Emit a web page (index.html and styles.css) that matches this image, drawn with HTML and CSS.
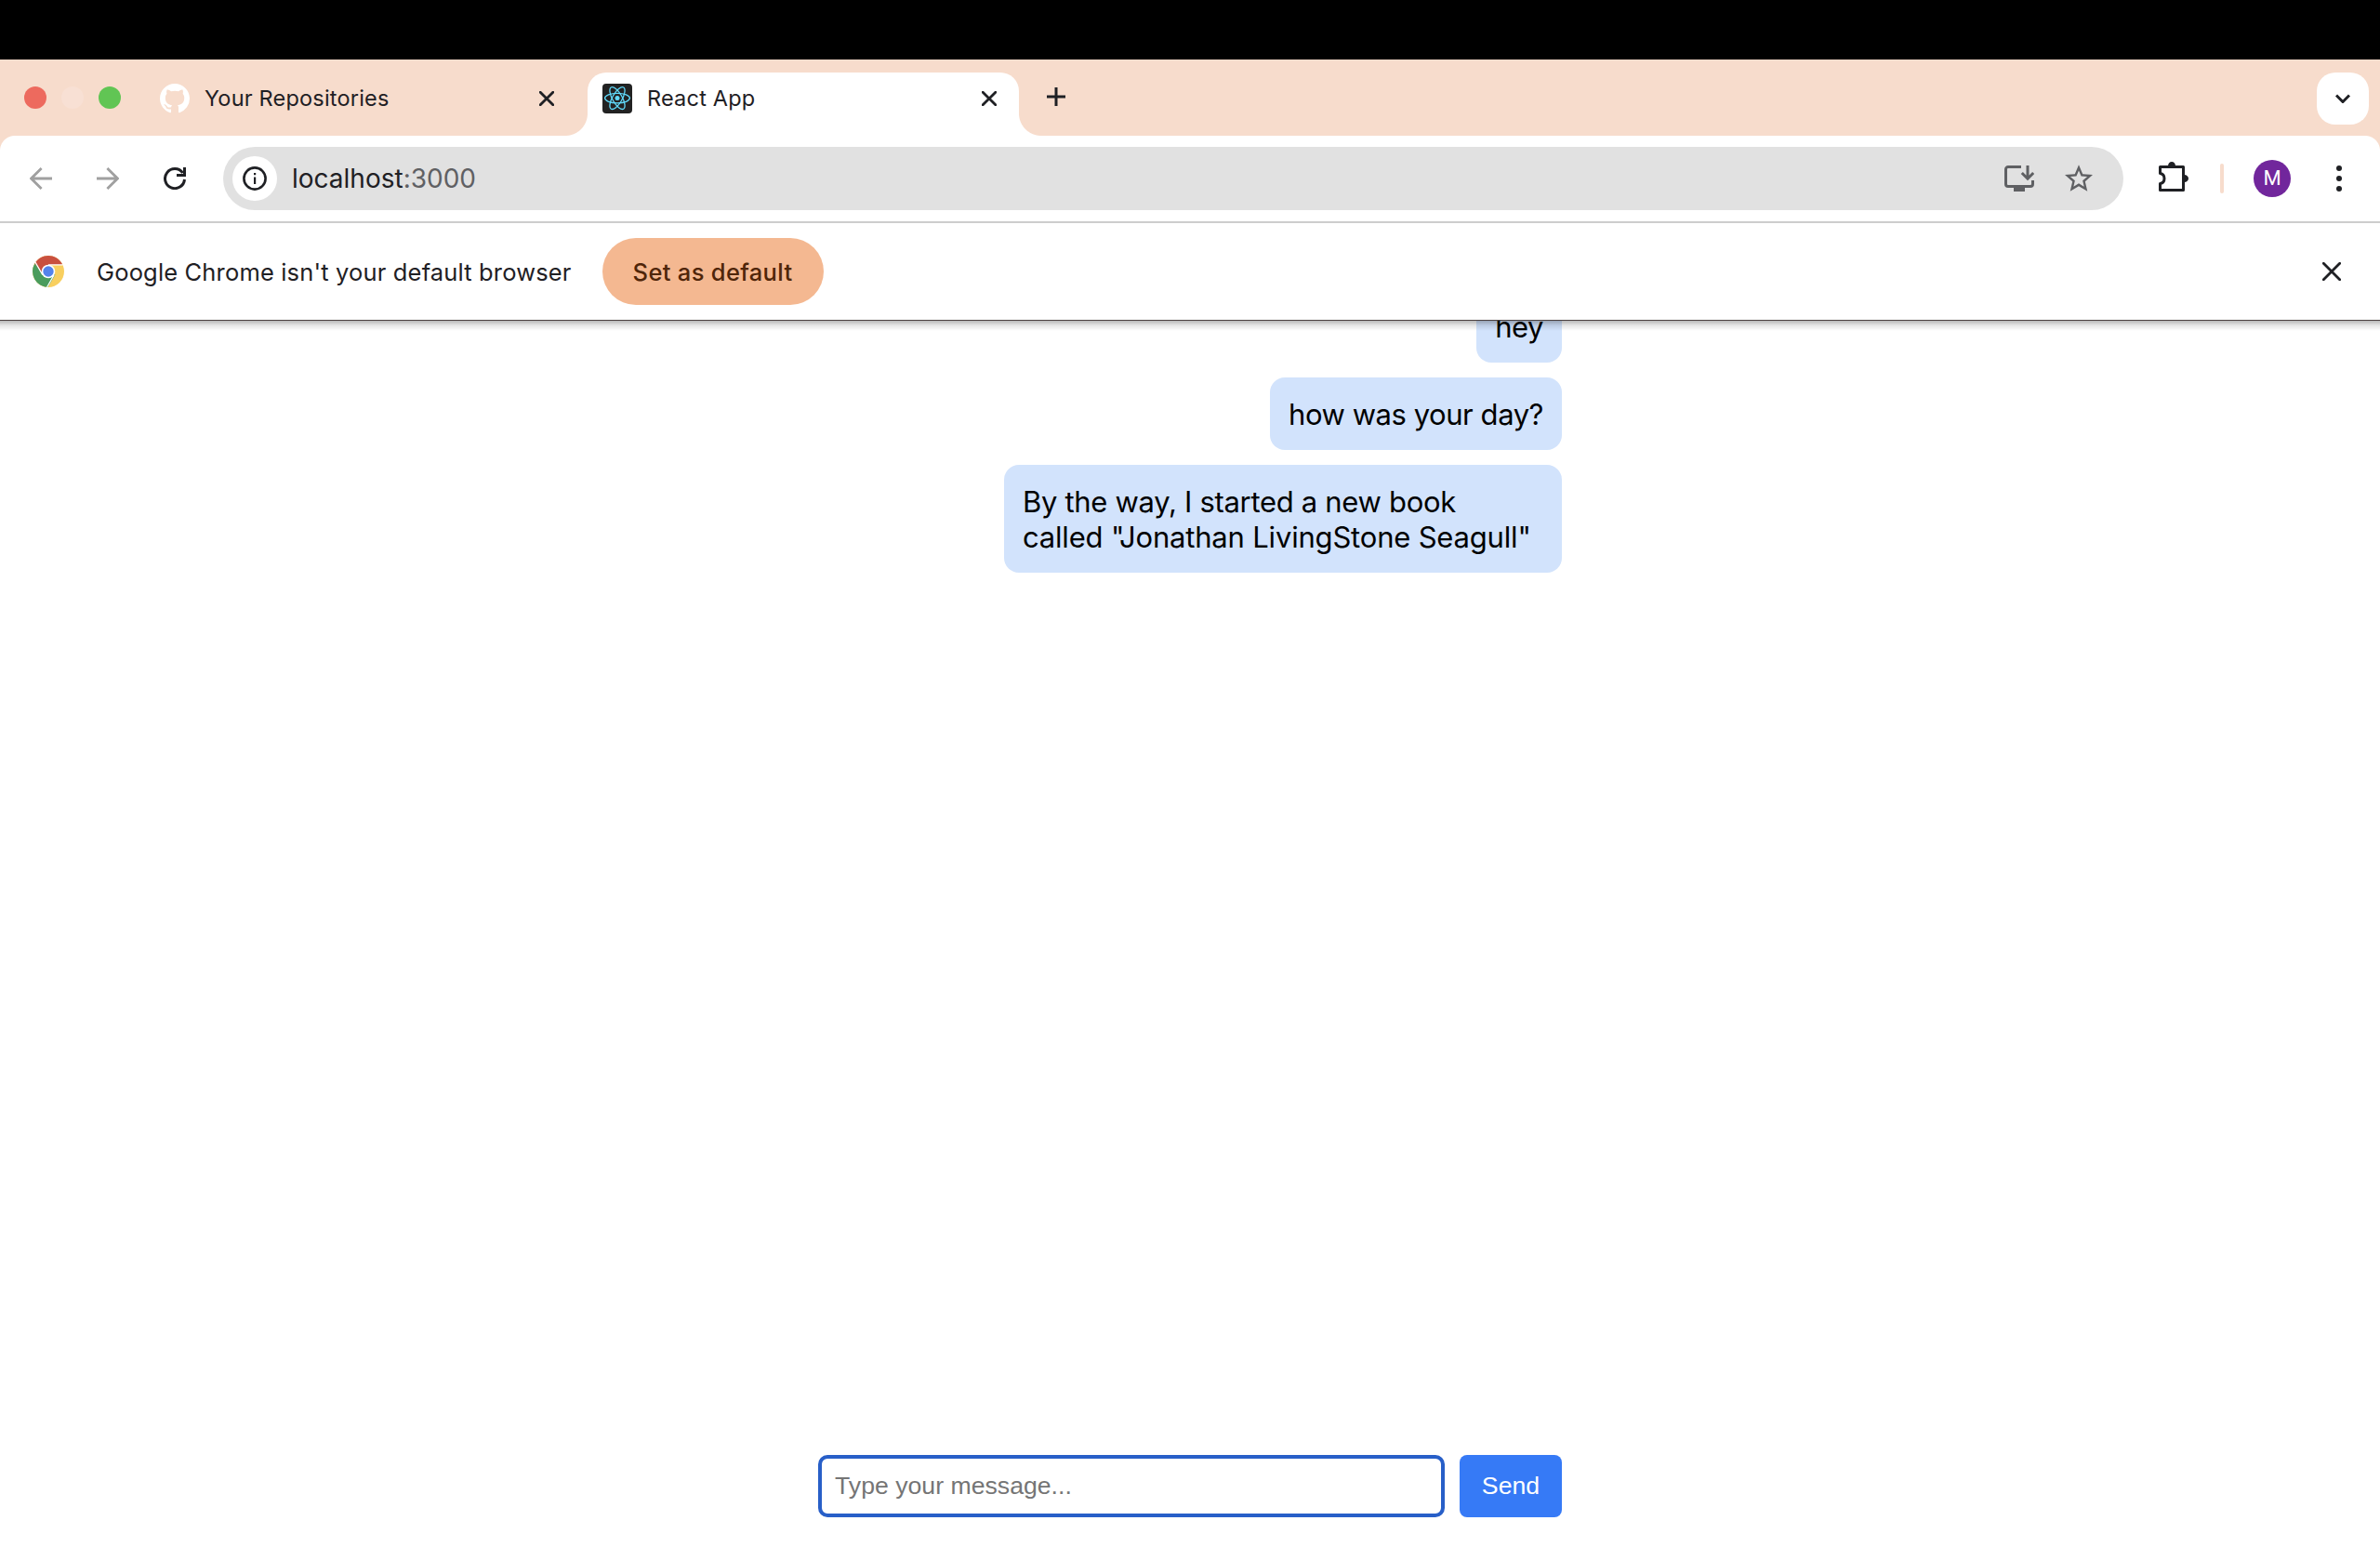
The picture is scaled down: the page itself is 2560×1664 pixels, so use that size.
FILE: index.html
```html
<!DOCTYPE html>
<html lang="en">
<head>
<meta charset="utf-8">
<title>React App</title>
<link rel="stylesheet" href="styles.css">
</head>
<body>
<div class="menubar"></div>
<header class="tabstrip">
  <div class="lights"><span class="light red"></span><span class="light idle"></span><span class="light green"></span></div>
  <div class="tab">
    <svg class="favicon" viewBox="0 0 16 16" fill="#fff"><path d="M8 0C3.58 0 0 3.58 0 8c0 3.54 2.29 6.53 5.47 7.59.4.07.55-.17.55-.38 0-.19-.01-.82-.01-1.49-2.01.37-2.53-.49-2.69-.94-.09-.23-.48-.94-.82-1.13-.28-.15-.68-.52-.01-.53.63-.01 1.08.58 1.23.82.72 1.21 1.87.87 2.33.66.07-.52.28-.87.51-1.07-1.78-.2-3.64-.89-3.64-3.95 0-.87.31-1.59.82-2.15-.08-.2-.36-1.02.08-2.12 0 0 .67-.21 2.2.82.64-.18 1.32-.27 2-.27s1.36.09 2 .27c1.53-1.04 2.2-.82 2.2-.82.44 1.1.16 1.92.08 2.12.51.56.82 1.27.82 2.15 0 3.07-1.87 3.75-3.65 3.95.29.25.54.73.54 1.48 0 1.07-.01 1.93-.01 2.2 0 .21.15.46.55.38A8.01 8.01 0 0 0 16 8c0-4.42-3.58-8-8-8z"/></svg>
    <span class="tab-title">Your Repositories</span>
    <svg class="tab-close" viewBox="0 0 16 16"><path d="M1.2 1.2l13.6 13.6M14.8 1.2L1.2 14.8"/></svg>
  </div>
  <div class="tab active">
    <svg class="favicon" viewBox="0 0 32 32"><rect width="32" height="32" rx="4" fill="#222"/><g fill="none" stroke="#61dafb" stroke-width="1.3"><ellipse cx="16" cy="15.6" rx="13.4" ry="5.2"/><ellipse cx="16" cy="15.6" rx="13.4" ry="5.2" transform="rotate(60 16 15.6)"/><ellipse cx="16" cy="15.6" rx="13.4" ry="5.2" transform="rotate(120 16 15.6)"/></g><circle cx="16" cy="15.6" r="2.5" fill="#61dafb"/></svg>
    <span class="tab-title">React App</span>
    <svg class="tab-close" viewBox="0 0 16 16"><path d="M1.2 1.2l13.6 13.6M14.8 1.2L1.2 14.8"/></svg>
  </div>
  <svg class="new-tab" viewBox="0 0 20 20"><path d="M10 0v20M0 10h20"/></svg>
  <div class="tab-search"><svg viewBox="0 0 16 10"><path d="M1 1.5l7 7 7-7"/></svg></div>
</header>
<nav class="toolbar">
  <svg class="nav-icon dim" viewBox="0 0 24 24"><path d="M24 12H2M12.6 1L1.6 12l11 11"/></svg>
  <svg class="nav-icon dim" viewBox="0 0 24 24"><path d="M0 12h22M11.4 1l11 11-11 11"/></svg>
  <svg class="nav-icon" viewBox="0 0 24 24"><path d="M22.5 13A10.5 10.5 0 1 1 20.6 6" stroke-width="3"/><path d="M14 8.5h8.5V0" stroke-width="3"/></svg>
  <div class="omnibox">
    <div class="site-info"><svg viewBox="0 0 26 26"><circle cx="13" cy="13" r="11.6" fill="none" stroke="#1f2024" stroke-width="2.6"/><path d="M12 11.5h2.2V19H12zM12 7h2.2v2.3H12z" fill="#1f2024"/></svg></div>
    <span class="url">localhost<span class="port">:3000</span></span>
    <svg class="install" viewBox="0 0 32 28"><path d="M18 1.5H4A2.5 2.5 0 0 0 1.5 4v16A2.5 2.5 0 0 0 4 22.500h24a2.5 2.5 0 0 0 2.5-2.5v-4" fill="none" stroke="#5f6063" stroke-width="3"/><path d="M10 23h12v5H10z" fill="#5f6063"/><path d="M25 0v13.5M18.8 8l6.2 6.2L31.200 8" fill="none" stroke="#5f6063" stroke-width="3"/></svg>
    <svg class="star" viewBox="2 2 20 19"><path fill="#5f6063" d="M22 9.240l-7.190-.62L12 2 9.190 8.630 2 9.240l5.460 4.730L5.820 21 12 17.270 18.180 21l-1.630-7.030L22 9.240zM12 15.400l-3.760 2.270 1-4.280-3.320-2.880 4.380-.38L12 6.100l1.710 4.040 4.380.38-3.320 2.880 1 4.280L12 15.400z"/></svg>
  </div>
  <svg class="puzzle" viewBox="0 0 32 32"><path d="M1.500 5.500h25v25h-25v-7c3-.5 4.500-2.700 4.500-5.500s-1.500-5-4.500-5.500z" fill="none" stroke="#1f2024" stroke-width="3" stroke-linejoin="round"/><path d="M10 4.500a4 4.500 0 0 1 8 0zM27.500 14a4.500 4 0 0 1 0 8z" fill="#1f2024"/></svg>
  <span class="divider"></span>
  <span class="avatar">M</span>
  <span class="menu"><i></i><i></i><i></i></span>
</nav>
<div class="infobar">
  <svg class="chrome" viewBox="-17 -17 34 34"><circle r="17" fill="#f8cf5f"/><path d="M-14.700-8.500A17 17 0 0 1 14.700-8.500L14.700-7H0L-8 4z" fill="#c9503f"/><path d="M-14.700-8.500A17 17 0 0 0-.5 17L7.400 3.500 0 0-6 2z" fill="#4a9c5d"/><path d="M0-7.200H15.500M-6.200 3.600L-14-9.900M6.200 3.600L-1.500 17" stroke="#fff" stroke-width="1.200"/><circle r="7.300" fill="#fff"/><circle r="5.700" fill="#5383ec"/></svg>
  <span class="notice">Google Chrome isn't your default browser</span>
  <button class="set-default">Set as default</button>
  <svg class="dismiss" viewBox="0 0 20 20"><path d="M1.300 1.300l17.400 17.400M18.700 1.300L1.300 18.700"/></svg>
</div>
<main class="page">
  <div class="chat">
    <div class="messages">
      <div class="bubble tight">hey</div>
      <div class="bubble tight">how was your day?</div>
      <div class="bubble long"><span class="line-snug">By the way, I started a new book</span><br>called "Jonathan LivingStone Seagull"</div>
    </div>
    <form class="composer">
      <input class="message-input" type="text" placeholder="Type your message...">
      <button class="send" type="button">Send</button>
    </form>
  </div>
</main>
</body>
</html>
```
FILE: styles.css
```css
* { box-sizing: border-box; }
html, body { height: 100%; }
body {
  margin: 0;
  display: flex;
  flex-direction: column;
  overflow: hidden;
  background: #fff;
  color: #1f2024;
  font-family: Inter, "Liberation Sans", sans-serif;
}
svg { display: block; flex: none; }
.menubar { height: 64px; background: #000; flex: none; }

.tabstrip {
  height: 82px;
  flex: none;
  display: flex;
  align-items: flex-start;
  background: #f7dccc;
  padding: 14px 12px 0 26px;
}
.lights { display: flex; gap: 16px; padding-top: 15px; width: 130px; }
.light { width: 24px; height: 24px; border-radius: 50%; }
.red { background: #ed6a5e; }
.idle { background: #f8e0d4; }
.green { background: #61c554; }
.tab {
  height: 68px;
  width: 476px;
  display: flex;
  align-items: center;
  padding: 0 36px 12px 16px;
}
.tab.active {
  position: relative;
  width: 464px;
  padding-right: 24px;
  background: #fff;
  border-radius: 20px 20px 0 0;
}
.tab.active::before,
.tab.active::after {
  content: "";
  position: absolute;
  bottom: 0;
  width: 24px;
  height: 24px;
}
.tab.active::before { left: -24px; background: radial-gradient(circle at 0 0, transparent 23.5px, #fff 24.5px); }
.tab.active::after { right: -24px; background: radial-gradient(circle at 100% 0, transparent 23.5px, #fff 24.5px); }
.favicon { width: 32px; height: 32px; }
.tab-title { font-size: 23.5px; line-height: 32px; letter-spacing: .2px; margin-left: 16px; white-space: nowrap; }
.tab-close { width: 16px; height: 16px; margin-left: auto; fill: none; stroke: #1f2024; stroke-width: 2.8; stroke-linecap: round; }
.new-tab { width: 20px; height: 20px; margin: 16px 0 0 30px; fill: none; stroke: #1f2024; stroke-width: 3; }
.tab-search {
  width: 56px;
  height: 56px;
  margin-left: auto;
  border-radius: 20px;
  background: #fff;
  display: grid;
  place-items: center;
}
.tab-search svg { width: 16px; height: 10px; fill: none; stroke: #1f2024; stroke-width: 3; }

.toolbar {
  height: 94px;
  flex: none;
  display: flex;
  align-items: center;
  padding: 0 41px 0 32px;
  background: #fff;
  border-bottom: 2px solid #cdcdcd;
  position: relative;
}
.toolbar::before,
.toolbar::after {
  content: "";
  position: absolute;
  top: 0;
  width: 16px;
  height: 16px;
}
.toolbar::before { left: 0; background: radial-gradient(circle at 100% 100%, transparent 15.5px, #f7dccc 16.5px); }
.toolbar::after { right: 0; background: radial-gradient(circle at 0 100%, transparent 15.5px, #f7dccc 16.5px); }
.nav-icon { width: 24px; height: 24px; margin-right: 48px; fill: none; stroke: #1f2024; stroke-width: 2.8; }
.nav-icon.dim { stroke: #a0a0a0; }
.omnibox {
  width: 2044px;
  height: 68px;
  margin-left: -8px;
  padding: 0 33px 0 10px;
  border-radius: 34px;
  background: #e1e1e1;
  display: flex;
  align-items: center;
}
.site-info { width: 48px; height: 48px; border-radius: 50%; background: #fff; display: grid; place-items: center; }
.site-info svg { width: 26px; height: 26px; }
.url { margin-left: 16px; font-size: 28px; line-height: 36px; }
.port { color: #5f6063; }
.install { width: 32px; height: 28px; margin-left: auto; }
.star { width: 30px; height: 29px; margin: -1px 0 0 33px; }
.puzzle { width: 32px; height: 32px; margin: -4px 0 0 38px; }
.divider { width: 4px; height: 32px; margin-left: 34px; border-radius: 2px; background: #f7dccc; }
.avatar {
  width: 40px;
  height: 40px;
  margin-left: 32px;
  border-radius: 50%;
  background: #71269c;
  color: #fff;
  font: 22px/40px Roboto, sans-serif;
  text-align: center;
}
.menu { margin-left: 49px; display: flex; flex-direction: column; gap: 5px; }
.menu i { width: 6px; height: 6px; border-radius: 50%; background: #1f2024; }

.infobar {
  height: 105px;
  flex: none;
  display: flex;
  align-items: center;
  padding: 0 42px 0 35px;
  background: #fff;
  border-bottom: 1px solid #4b4140;
  position: relative;
  z-index: 1;
}
.infobar::after {
  content: "";
  position: absolute;
  left: 0;
  right: 0;
  top: 105px;
  height: 11px;
  background: linear-gradient(rgba(0, 0, 0, .28), rgba(0, 0, 0, .1) 45%, transparent);
}
.chrome { width: 34px; height: 34px; }
.notice { margin-left: 35px; padding-top: 1px; width: 510px; font-size: 25.5px; line-height: 36px; letter-spacing: .16px; white-space: nowrap; }
.set-default {
  width: 238px;
  height: 72px;
  margin-left: 34px;
  padding: 1px 1px 0 0;
  border: 0;
  border-radius: 36px;
  background: #f4b891;
  color: #4f2509;
  font: 500 25.5px/36px Inter, sans-serif;
  letter-spacing: .33px;
}
.dismiss { width: 20px; height: 20px; margin-left: auto; fill: none; stroke: #1f2024; stroke-width: 2.8; stroke-linecap: round; }

.page { flex: 1; min-height: 0; display: flex; justify-content: center; }
.chat { width: 800px; display: flex; flex-direction: column; justify-content: space-between; padding-bottom: 32px; }
.messages { display: flex; flex-direction: column; align-items: flex-end; gap: 16px; margin-top: -33px; }
.bubble {
  padding: 21px 20px 19px;
  border-radius: 16px;
  background: #d2e3fc;
  color: #000;
  font-size: 31px;
  line-height: 38px;
  letter-spacing: -.19px;
  white-space: nowrap;
}
.bubble.tight { letter-spacing: -.45px; }
.bubble.long { width: 600px; }
.line-snug { letter-spacing: -.31px; }
.composer { display: flex; gap: 16px; height: 67px; }
.message-input {
  width: 674px;
  padding: 0 14px;
  border: 4px solid #285fc8;
  border-radius: 10px;
  font: 26.67px "Liberation Sans", Arial, sans-serif;
  outline: none;
}
.message-input::placeholder { color: #757575; }
.send {
  width: 110px;
  padding: 0;
  border: 0;
  border-radius: 8px;
  background: #367af6;
  color: #fff;
  font: 26.67px "Liberation Sans", Arial, sans-serif;
}
```
